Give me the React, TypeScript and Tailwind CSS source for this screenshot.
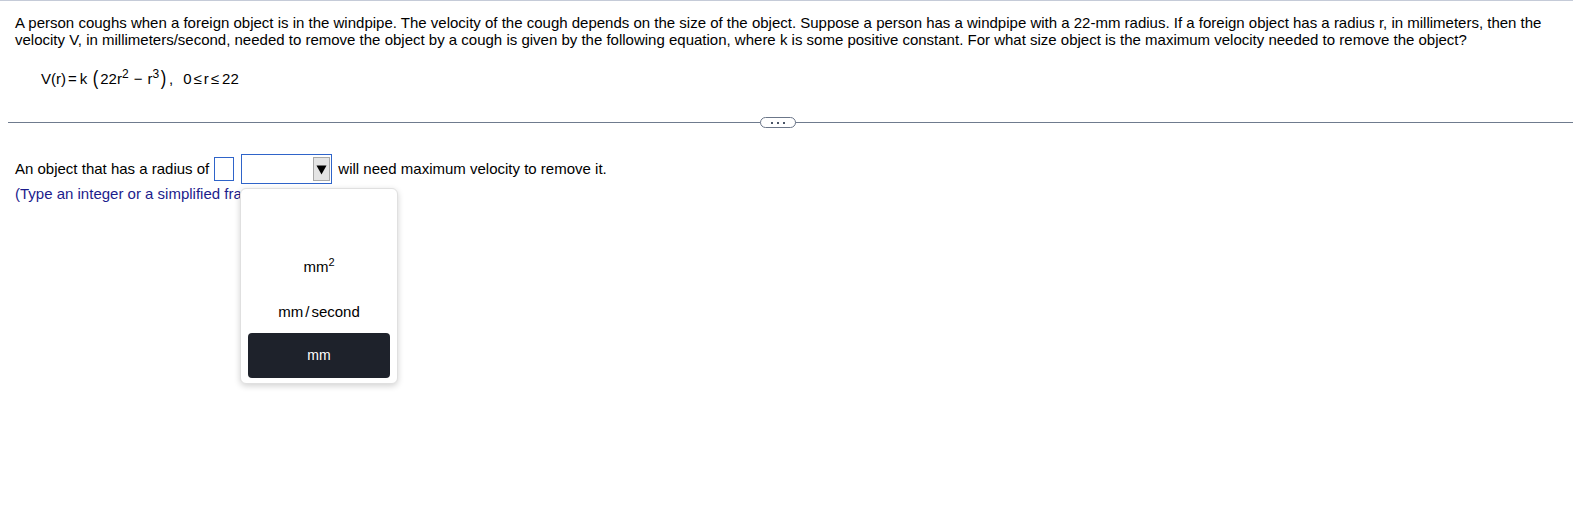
import React from "react";

export default function App() {
  return (
    <div className="relative w-[1573px] h-[522px] bg-white text-black border-t border-[#c5cbd8]" style={{ fontFamily: '"Liberation Sans", Arial, sans-serif' }}>
      <div className="pl-[15px] pr-[30px] pt-[13px] text-[15px] leading-[17px]">
        A person coughs when a foreign object is in the windpipe. The velocity of the cough depends on the size of the object. Suppose a person has a windpipe with a 22-mm radius. If a foreign object has a radius r, in millimeters, then the velocity V, in millimeters/second, needed to remove the object by a cough is given by the following equation, where k is some positive constant. For what size object is the maximum velocity needed to remove the object?
      </div>
      <div className="pl-[41px] mt-[21px] h-[20px] text-[15px] leading-[20px] flex items-center whitespace-nowrap">
        <span>V(r)</span>
        <span className="ml-[2px]">=</span>
        <span className="ml-[3px]">k</span>
        <span className="ml-[6px] inline-block scale-y-[1.4] scale-x-[1.1] relative -top-[1px]">(</span>
        <span className="ml-[2px]">22r<sup className="text-[12px]">2</sup></span>
        <span className="ml-[5px]">−</span>
        <span className="ml-[5px]">r<sup className="text-[12px]">3</sup></span>
        <span className="ml-[2px] inline-block scale-y-[1.4] scale-x-[1.1] relative -top-[1px]">)</span>
        <span className="ml-[3px]">,</span>
        <span className="ml-[10px]">0</span>
        <span className="ml-[2px]">≤</span>
        <span className="ml-[2px]">r</span>
        <span className="ml-[2px]">≤</span>
        <span className="ml-[3px]">22</span>
      </div>
      <div className="relative mt-[33px] ml-[8px] h-[1px] bg-[#6f7b8e]">
        <div className="absolute left-[752px] -top-[5px] w-[36px] h-[11px] rounded-full border border-[#6b7689] bg-white flex items-center justify-center gap-[4px]">
          <span className="w-[2px] h-[2px] bg-[#4a5568]" />
          <span className="w-[2px] h-[2px] bg-[#4a5568]" />
          <span className="w-[2px] h-[2px] bg-[#4a5568]" />
        </div>
      </div>
      <div className="pl-[15px] mt-[31px] flex items-center text-[15px] h-[30px] whitespace-nowrap">
        <span>An object that has a radius of</span>
        <span className="ml-[5px] w-[20px] h-[24px] border border-[#2f64c9]" />
        <div className="ml-[7px] w-[91px] h-[30px] border border-[#2f64c9] flex items-center justify-end pr-[1px]">
          <div className="w-[17px] h-[24px] bg-[#e4e4e4] border border-[#a8a8a8] flex items-center justify-center">
            <svg width="11" height="11" viewBox="0 0 11 11"><path d="M0.5 1.5 H10.5 L5.5 10.5 Z" fill="#000" /></svg>
          </div>
        </div>
        <span className="ml-[6px]">will need maximum velocity to remove it.</span>
      </div>
      <div className="pl-[15px] mt-[1px] text-[15px] leading-[18px] text-[#1c1c8c] whitespace-nowrap">(Type an integer or a simplified fraction.)</div>
      <div className="absolute left-[240px] top-[187px] w-[158px] h-[196px] bg-white rounded-[6px] border border-[#e0e0e0] shadow-[0_2px_6px_rgba(0,0,0,0.18)] flex flex-col items-center px-[7px] pt-[66px] text-[15px]">
        <div className="h-[24px] flex items-center">mm<sup className="text-[11px]">2</sup></div>
        <div className="mt-[23px] h-[20px] flex items-center">mm<span className="mx-[2px]">/</span>second</div>
        <div className="mt-[11px] w-full h-[45px] rounded-[4px] bg-[#1e222b] text-white flex items-center justify-center text-[14px]">mm</div>
      </div>
    </div>
  );
}
